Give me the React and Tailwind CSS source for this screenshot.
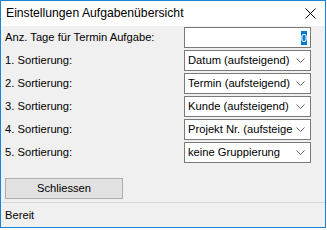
import React from "react";

const font = { fontFamily: '"Liberation Sans", Arial, sans-serif' };

const rows = [
  "Datum (aufsteigend)",
  "Termin (aufsteigend)",
  "Kunde (aufsteigend)",
  "Projekt Nr. (aufsteigend)",
  "keine Gruppierung",
];

const Chevron = () => (
  <svg width="9" height="5" viewBox="0 0 9 5" className="shrink-0">
    <polyline points="0.5,0.5 4.5,4.5 8.5,0.5" fill="none" stroke="#606060" strokeWidth="1" />
  </svg>
);

const Combo = ({ value }) => (
  <div className="w-[127px] h-[21px] bg-white border border-[#7a7a7a] flex items-center pl-[3px] pr-[5px] gap-[3px]">
    <span className="flex-1 overflow-hidden whitespace-nowrap text-[11.2px] text-black">{value}</span>
    <Chevron />
  </div>
);

const App = () => {
  return (
    <div className="w-[327px] h-[230px] bg-white" style={font}>
      <div className="w-[326px] h-[228px] border border-[#1883d7] flex flex-col">
        <div className="h-[25px] bg-white flex items-center justify-between pl-[5px] pr-[9px]">
          <span className="text-[12.2px] text-black">Einstellungen Aufgabenübersicht</span>
          <svg width="11" height="11" viewBox="0 0 11 11">
            <line x1="0.5" y1="0.5" x2="10.5" y2="10.5" stroke="#000" strokeWidth="1" />
            <line x1="10.5" y1="0.5" x2="0.5" y2="10.5" stroke="#000" strokeWidth="1" />
          </svg>
        </div>
        <div className="flex-1 bg-[#f0f0f0] flex flex-col pt-[1px] pl-[4px]">
          <div className="grid grid-cols-[179px_127px] gap-y-[2px] text-[11.2px] text-black">
            <div className="h-[21px] flex items-center">Anz. Tage für Termin Aufgabe:</div>
            <div className="w-[127px] h-[21px] bg-white border border-[#7a7a7a] flex items-center justify-end pr-[3px]">
              <span className="bg-[#0078d7] text-white leading-[14px]">0</span>
            </div>
            {rows.map((r, i) => (
              <React.Fragment key={i}>
                <div className="h-[21px] flex items-center">{i + 1}. Sortierung:</div>
                <Combo value={r} />
              </React.Fragment>
            ))}
          </div>
          <button className="mt-[15px] w-[118px] h-[21px] bg-[#e1e1e1] border border-[#adadad] text-[11.2px] text-black">
            Schliessen
          </button>
        </div>
        <div className="h-[25px] bg-[#f0f0f0] border-t border-[#d7d7d7] flex items-center pl-[4px] text-[11.2px] text-black">
          Bereit
        </div>
      </div>
    </div>
  );
};

export default App;
